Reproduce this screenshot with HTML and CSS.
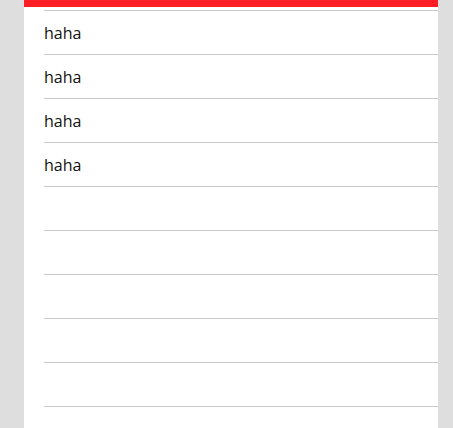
FILE: index.html
```html
<!DOCTYPE html>
<html>
<head>
<meta charset="utf-8">
<link rel="stylesheet" href="styles.css">
</head>
<body>
<div class="panel">
  <div class="topbar"></div>
  <ul class="list">
    <li class="item">haha</li>
    <li class="item">haha</li>
    <li class="item">haha</li>
    <li class="item">haha</li>
    <li class="item"></li>
    <li class="item"></li>
    <li class="item"></li>
    <li class="item"></li>
    <li class="item"></li>
    <li class="item"></li>
  </ul>
</div>
</body>
</html>
```
FILE: styles.css
```css
html, body {
  margin: 0;
  padding: 0;
  background: #dedede;
  height: 100%;
  overflow: hidden;
}
body {
  font-family: "Open Sans", "Liberation Sans", sans-serif;
  font-size: 16px;
  color: #111;
}
.panel {
  margin-left: 24px;
  width: 414px;
  height: 100%;
  background: #fff;
  overflow: hidden;
}
.topbar {
  height: 7px;
  background: #fe1d25;
}
.list {
  list-style: none;
  margin: 3px 0 0 0;
  padding: 0 0 0 20px;
}
.item {
  height: 42px;
  padding-top: 1px;
  line-height: 43px;
  border-top: 1px solid #c8c8c8;
}
```
